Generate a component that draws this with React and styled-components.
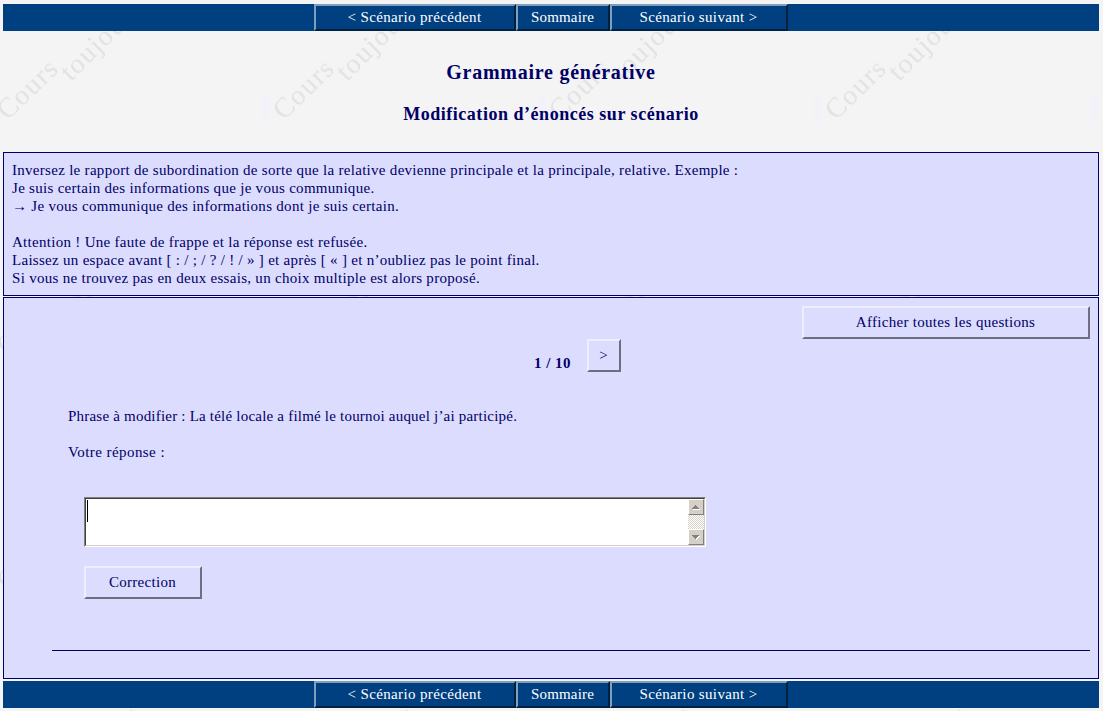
import React from "react";
import styled, { createGlobalStyle } from "styled-components";

const navy = "#000066";
const lilac = "#dcdcff";
const blue = "#004080";

const GlobalStyle = createGlobalStyle`
  * { box-sizing: border-box; }
  body {
    margin: 0;
    background: #f4f4f4;
    color: ${navy};
    font: 15px/18px "Liberation Serif", "Times New Roman", serif;
    letter-spacing: 0.29px;
    overflow: hidden;
  }
`;

const Page = styled.div`
  position: relative;
  height: 711px;
  padding: 4px 4px 0 3px;
  display: flex;
  flex-direction: column;
  overflow: hidden;
`;

const Watermark = styled.svg`
  position: absolute;
  inset: 0;
  width: 100%;
  height: 100%;
  z-index: -1;
`;

const NavBar = styled.nav`
  flex: none;
  height: 27px;
  display: flex;
  justify-content: center;
  background: ${blue};
`;

const NavButton = styled.button`
  width: ${(p) => p.$width}px;
  height: 27px;
  padding: 0 1px 1px 0;
  border: 2px solid;
  border-color: #7f9fbf #00203f #00203f #7f9fbf;
  background: ${blue};
  color: #fff;
  font: inherit;
  letter-spacing: ${(p) => p.$spacing}px;
`;

const Header = styled.header`
  flex: none;
  height: 121px;
  text-align: center;
`;

const Title = styled.h1`
  margin: 0;
  padding-top: 29px;
  font-size: 20px;
  line-height: 25px;
  letter-spacing: 0.74px;
`;

const Subtitle = styled.h2`
  margin: 0;
  padding-top: 18px;
  font-size: 18px;
  line-height: 22px;
  letter-spacing: 0.53px;
`;

const Panel = styled.section`
  flex: none;
  height: ${(p) => p.$height}px;
  margin-bottom: ${(p) => p.$gap}px;
  border: 1px solid ${navy};
  background: ${lilac};
`;

const Instructions = styled(Panel)`
  padding: 8px 8px 7px;
`;

const Exercise = styled(Panel)`
  padding: 8px 8px 0 48px;
`;

const TextLine = styled.div`
  min-height: 18px;
  white-space: pre;
  letter-spacing: ${(p) => p.$spacing ?? 0.29}px;
`;

const PushButton = styled.button`
  display: block;
  width: ${(p) => p.$width}px;
  height: 33px;
  padding: 0 1px 1px 0;
  border: 2px solid;
  border-color: #eeeeff #6e6e80 #6e6e80 #eeeeff;
  background: ${lilac};
  color: ${navy};
  font: inherit;
  letter-spacing: inherit;
`;

const TopRow = styled.div`
  display: flex;
  justify-content: flex-end;
`;

const Pager = styled.div`
  display: flex;
  justify-content: center;
  gap: 16px;
  height: 33px;
  padding-left: 13px;
`;

const Counter = styled.strong`
  padding-top: 15px;
  letter-spacing: 0.5px;
`;

const Question = styled.div`
  padding: 35px 16px 0;
  display: grid;
  gap: 18px;
`;

const AnswerForm = styled.div`
  padding: 36px 32px 0;
`;

const AnswerBox = styled.div`
  width: 622px;
  height: 50px;
  margin-bottom: 19px;
  border: 1px solid;
  border-color: #808080 #fff #fff #808080;
`;

const AnswerInner = styled.div`
  height: 48px;
  border: 1px solid;
  border-color: #404040 #d4d0c8 #d4d0c8 #404040;
  background: #fff;
  display: flex;
  justify-content: space-between;
`;

const Caret = styled.div`
  width: 1px;
  height: 22px;
  margin: 1px 0 0 1px;
  background: #000;
`;

const ScrollTrack = styled.div`
  width: 16px;
  height: 46px;
  display: flex;
  flex-direction: column;
  justify-content: space-between;
  background: repeating-conic-gradient(#d4d0c8 0 25%, #fff 0 50%) 0 0 / 2px 2px;
`;

const ScrollButton = styled.div`
  height: 16px;
  border: 1px solid;
  border-color: #fff #808080 #808080 #fff;
  background: #d4d0c8;
  svg { display: block; }
`;

const Rule = styled.div`
  height: 1px;
  margin-top: 51px;
  background: ${navy};
`;

const instructions = [
  "Inversez le rapport de subordination de sorte que la relative devienne principale et la principale, relative. Exemple :",
  "Je suis certain des informations que je vous communique.",
  "→ Je vous communique des informations dont je suis certain.",
  "",
  "Attention ! Une faute de frappe et la réponse est refusée.",
  "Laissez un espace avant [ : / ; / ? / ! / » ] et après [ « ] et n’oubliez pas le point final.",
  "Si vous ne trouvez pas en deux essais, un choix multiple est alors proposé.",
];

function Navigation() {
  return (
    <NavBar>
      <NavButton $width={202} $spacing={0.36}>&lt; Scénario précédent</NavButton>
      <NavButton $width={94} $spacing={0.17}>Sommaire</NavButton>
      <NavButton $width={178} $spacing={0.35}>Scénario suivant &gt;</NavButton>
    </NavBar>
  );
}

function Arrow({ down }) {
  const rows = down ? [7, 5, 3, 1] : [1, 3, 5, 7];
  const draw = (dx, dy, fill) =>
    rows.map((w, i) => (
      <rect key={fill + i} x={6.5 - w / 2 + dx} y={5 + i + dy} width={w} height="1" fill={fill} />
    ));
  return (
    <svg width="14" height="14" shapeRendering="crispEdges">
      {draw(1, 1, "#fff")}
      {draw(0, 0, "#808080")}
    </svg>
  );
}

export default function App() {
  return (
    <Page>
      <GlobalStyle />
      <Watermark aria-hidden="true">
        <defs>
          <pattern id="mark" x="-14" y="0" width="276" height="235.3" patternUnits="userSpaceOnUse">
            <rect x="0" y="95" width="8" height="29" fill="#f2f2f8" />
            <g fill="#e2e2e2" fontSize="28" fontFamily="Liberation Serif, serif">
              <text transform="translate(21.5 121) rotate(-44)" letterSpacing="1.3">Cours</text>
              <text transform="translate(85 82) rotate(-45)" letterSpacing="1.2">toujours</text>
            </g>
          </pattern>
        </defs>
        <rect width="100%" height="100%" fill="url(#mark)" />
      </Watermark>
      <Navigation />
      <Header>
        <Title>Grammaire générative</Title>
        <Subtitle>Modification d’énoncés sur scénario</Subtitle>
      </Header>
      <Instructions $height={144} $gap={1}>
        {instructions.map((line, i) => (
          <TextLine key={i}>{line}</TextLine>
        ))}
      </Instructions>
      <Exercise $height={382} $gap={2}>
        <TopRow>
          <PushButton $width={288}>Afficher toutes les questions</PushButton>
        </TopRow>
        <Pager>
          <Counter>1 / 10</Counter>
          <PushButton $width={34}>&gt;</PushButton>
        </Pager>
        <Question>
          <TextLine $spacing={0.21}>Phrase à modifier : La télé locale a filmé le tournoi auquel j’ai participé.</TextLine>
          <TextLine $spacing={0.43}>Votre réponse :</TextLine>
        </Question>
        <AnswerForm>
          <AnswerBox>
            <AnswerInner>
              <Caret />
              <ScrollTrack>
                <ScrollButton><Arrow /></ScrollButton>
                <ScrollButton><Arrow down /></ScrollButton>
              </ScrollTrack>
            </AnswerInner>
          </AnswerBox>
          <PushButton $width={118}>Correction</PushButton>
        </AnswerForm>
        <Rule />
      </Exercise>
      <Navigation />
    </Page>
  );
}
